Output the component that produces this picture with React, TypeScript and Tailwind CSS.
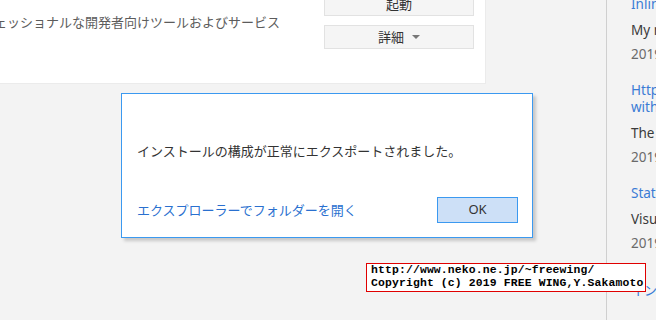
import React from 'react';

const jp = "font-['Noto_Sans_CJK_JP',sans-serif]";

interface NewsItemProps {
  title: string[];
  desc: string;
  date: string;
}

function NewsItem({ title, desc, date }: NewsItemProps) {
  return (
    <div className="mb-[16px]">
      {title.map(t => (
        <div key={t} className="text-[13.5px] leading-[17px] text-[#3a7bd5]">{t}</div>
      ))}
      <div className="mt-[5px] text-[13.5px] leading-[24px] text-[#3a3a3a]">{desc}</div>
      <div className="text-[13.5px] leading-[24px] text-[#6a6a6a]">{date}</div>
    </div>
  );
}

export default function App() {
  return (
    <div className={`relative w-[656px] h-[320px] overflow-hidden bg-[#f3f3f3] flex ${jp}`}>
      {/* Main column */}
      <div className="w-[606px] shrink-0">
        <div className="w-[486px] h-[84px] bg-white border-b border-r border-[#ebebeb] flex">
          <div className="-ml-[45px] mt-[13px] text-[13px] leading-[18px] text-[#5c5c5c] whitespace-nowrap">
            プロフェッショナルな開発者向けツールおよびサービス
          </div>
          <div className="ml-auto mr-[11px] -mt-[8px] w-[150px] flex flex-col gap-[9px] shrink-0">
            <button className="h-[24px] border border-[#e2e2e2] bg-[#f5f5f5] text-[13px] text-[#333]">起動</button>
            <button className="h-[24px] border border-[#e2e2e2] bg-[#f5f5f5] text-[13px] text-[#333] flex items-center justify-center gap-[8px]">
              詳細
              <span className="w-0 h-0 border-l-[4px] border-r-[4px] border-t-[4px] border-l-transparent border-r-transparent border-t-[#777]" />
            </button>
          </div>
        </div>
      </div>

      {/* Right news column */}
      <div className="border-l border-[#cfcfcf] pl-[24px] w-[300px] shrink-0 whitespace-nowrap font-['Noto_Sans',sans-serif]">
        <div className="-mt-[4px]">
          <NewsItem title={['Inline Hints for C#']} desc="My new favorite feature" date="2019年3月1日" />
          <NewsItem title={['HttpClient support', 'with better performance']} desc="The ASP.NET team" date="2019年2月27日" />
          <NewsItem title={['Status Bar update']} desc="Visual Studio 2019" date="2019年2月26日" />
          <div className={`mt-[26px] text-[13px] leading-[17px] text-[#3a7bd5] ${jp}`}>インストール</div>
        </div>
      </div>

      {/* Dialog */}
      <div className="absolute left-[121px] top-[93px] w-[412px] h-[145px] bg-white border border-[#3b99f0] shadow-[3px_3px_3px_rgba(0,0,0,0.18)] pl-[15px] pr-[14px] pt-[48px]">
        <div className="text-[13px] leading-[18px] text-[#333]">インストールの構成が正常にエクスポートされました。</div>
        <div className="mt-[37px] flex items-center justify-between">
          <span className="text-[13px] leading-[18px] text-[#2a70cf]">エクスプローラーでフォルダーを開く</span>
          <button className="w-[81px] h-[26px] bg-[#cde0f7] border border-[#3b99f0] text-[13px] text-[#333] font-['Noto_Sans',sans-serif]">OK</button>
        </div>
      </div>

      {/* Watermark */}
      <div className="absolute left-[366px] top-[263px] w-[280px] h-[29px] bg-white border border-[#e00000] pl-[4px] font-['Liberation_Mono',monospace] font-bold text-[11.4px] tracking-[0.15px] leading-[13px] text-black whitespace-nowrap">
        <div>http://www.neko.ne.jp/~freewing/</div>
        <div>Copyright (c) 2019 FREE WING,Y.Sakamoto</div>
      </div>
    </div>
  );
}
